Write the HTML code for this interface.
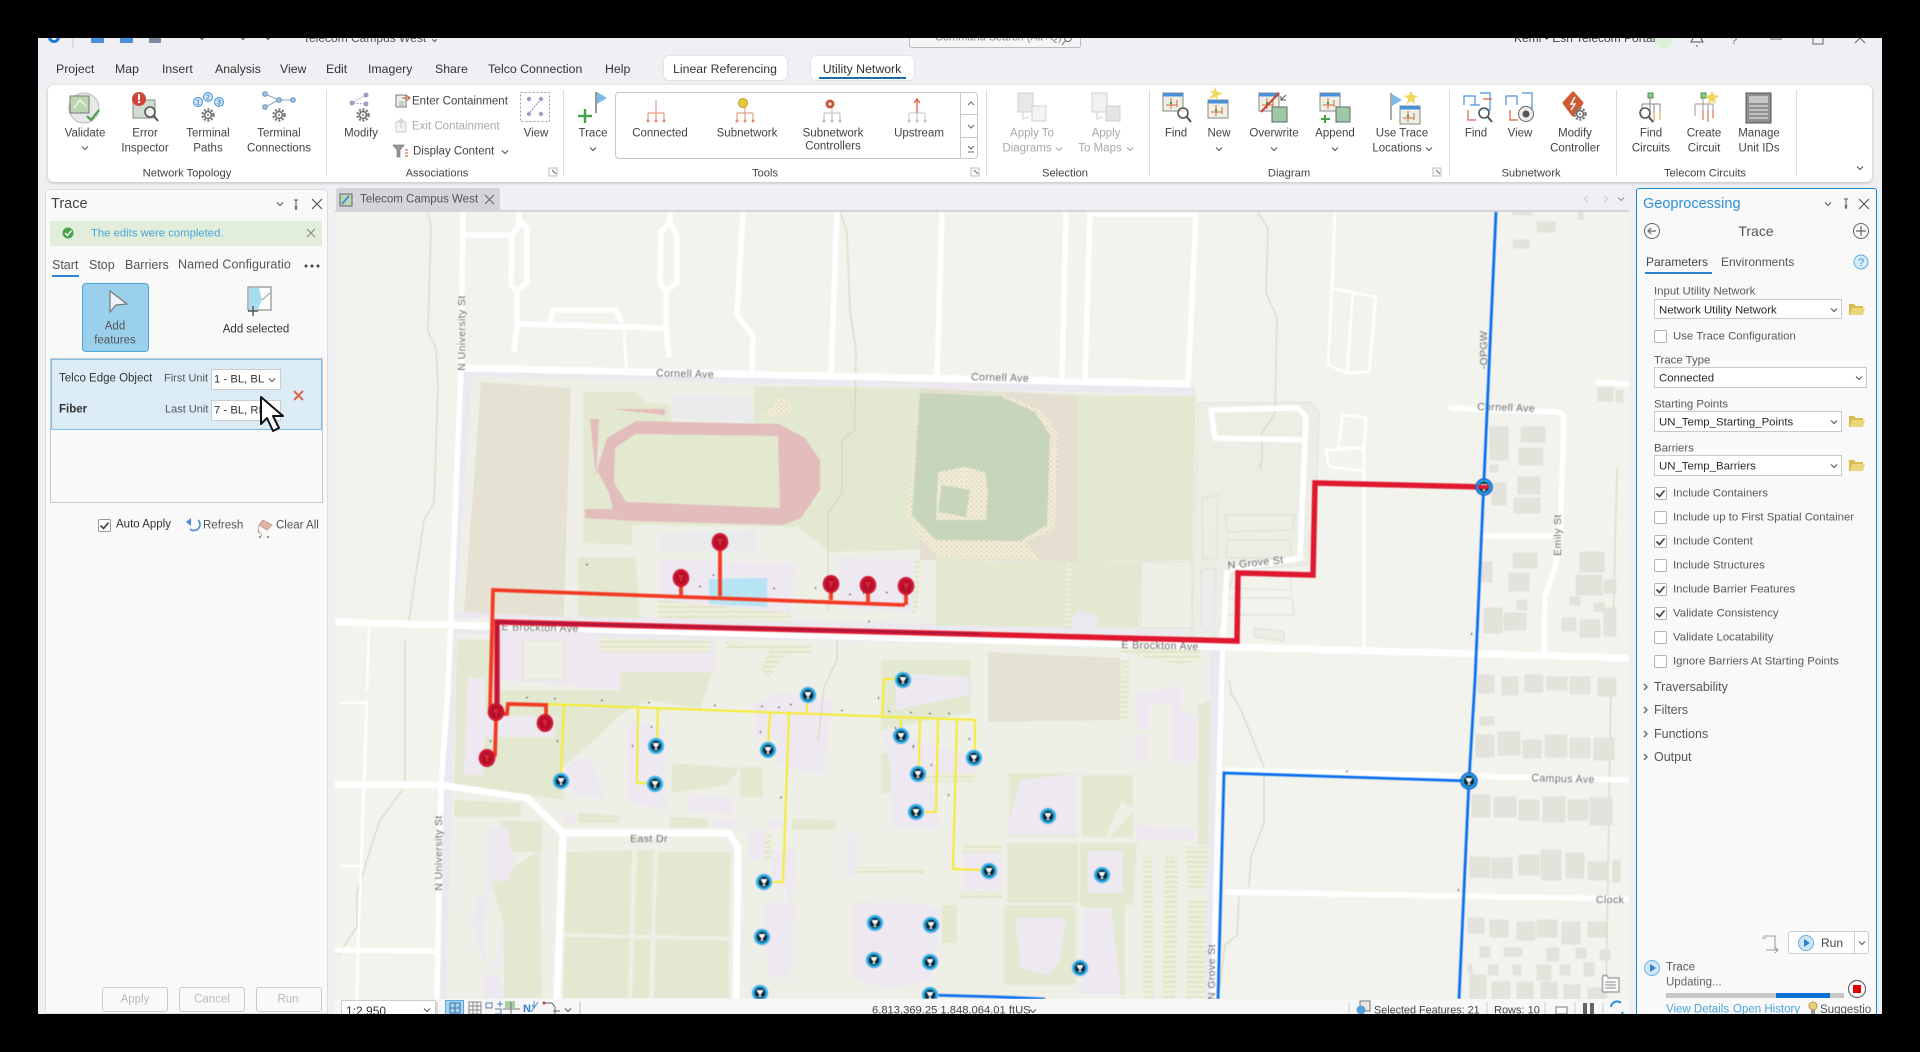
<!DOCTYPE html>
<html><head><meta charset="utf-8"><title>Telecom Campus West</title>
<style>
html,body{margin:0;padding:0;background:#000;width:1920px;height:1052px;overflow:hidden}
body{position:relative;font-family:"Liberation Sans",sans-serif;color:#444}
.a{position:absolute}
.t{position:absolute;white-space:nowrap;transform:translateY(calc(-50% + 1px));font-size:12px;line-height:1}
.c{position:absolute;white-space:nowrap;transform:translate(-50%,calc(-50% + 1px));font-size:11.5px;line-height:1;text-align:center}
.g{color:#a9a9a9}
.dd{position:absolute;background:#fff;border:1px solid #c9c9c9;box-sizing:border-box}
.cb{position:absolute;width:13px;height:13px;background:#fff;border:1px solid #b4b4b4;border-radius:2px;box-sizing:border-box}
.p{font-size:11.4px;color:#5a5a5a}
.v{font-size:11.4px;color:#2a2a2a}
.h{font-size:12.5px;color:#555}
</style></head><body>
<div class="a" style="left:38px;top:38px;width:1844px;height:976px;background:#eef0f3"></div>

<!-- title bar -->
<div class="t" style="left:303px;top:37px;font-size:12px;color:#555">Telecom Campus West ⌄</div>
<div class="a" style="left:909px;top:30px;width:172px;height:18px;border:1px solid #bbb;border-radius:3px;box-sizing:border-box;background:#f4f5f7"></div>
<div class="t" style="left:935px;top:37px;font-size:11px;color:#888">Command Search (Alt+Q)</div>
<div class="t" style="left:1514px;top:37px;font-size:12px;color:#444">Kemi • Esri Telecom Portal</div>

<!-- menu -->
<div class="t" style="left:56px;top:68px;font-size:12.3px;color:#333">Project</div>
<div class="t" style="left:115px;top:68px;font-size:12.3px;color:#333">Map</div>
<div class="t" style="left:162px;top:68px;font-size:12.3px;color:#333">Insert</div>
<div class="t" style="left:215px;top:68px;font-size:12.3px;color:#333">Analysis</div>
<div class="t" style="left:280px;top:68px;font-size:12.3px;color:#333">View</div>
<div class="t" style="left:326px;top:68px;font-size:12.3px;color:#333">Edit</div>
<div class="t" style="left:368px;top:68px;font-size:12.3px;color:#333">Imagery</div>
<div class="t" style="left:435px;top:68px;font-size:12.3px;color:#333">Share</div>
<div class="t" style="left:488px;top:68px;font-size:12.3px;color:#333">Telco Connection</div>
<div class="t" style="left:605px;top:68px;font-size:12.3px;color:#333">Help</div>
<div class="a" style="left:664px;top:56px;width:123px;height:24px;background:#fff;border-radius:5px;box-shadow:0 0 2px #ccc"></div>
<div class="c" style="left:725px;top:68px;font-size:12.3px;color:#333">Linear Referencing</div>
<div class="a" style="left:811px;top:56px;width:103px;height:24px;background:#fff;border-radius:5px;box-shadow:0 0 2px #ccc"></div>
<div class="c" style="left:862px;top:68px;font-size:12.3px;color:#333">Utility Network</div>
<div class="a" style="left:819px;top:77px;width:87px;height:2px;background:#1a6aa8"></div>

<!-- ribbon -->
<div class="a" style="left:48px;top:85px;width:1824px;height:97px;background:#fff;border-radius:6px;box-shadow:0 1px 3px #bbb"></div>
<div class="a" style="left:326px;top:90px;width:1px;height:86px;background:#ddd"></div>
<div class="a" style="left:563px;top:90px;width:1px;height:86px;background:#ddd"></div>
<div class="a" style="left:986px;top:90px;width:1px;height:86px;background:#ddd"></div>
<div class="a" style="left:1149px;top:90px;width:1px;height:86px;background:#ddd"></div>
<div class="a" style="left:1449px;top:90px;width:1px;height:86px;background:#ddd"></div>
<div class="a" style="left:1616px;top:90px;width:1px;height:86px;background:#ddd"></div>
<div class="a" style="left:1796px;top:90px;width:1px;height:86px;background:#ddd"></div>
<div class="a" style="left:615px;top:92px;width:363px;height:67px;border:1px solid #c8c8c8;border-radius:4px;box-sizing:border-box"></div>
<div class="a" style="left:960px;top:92px;width:1px;height:67px;background:#c8c8c8"></div>
<div class="a" style="left:960px;top:114px;width:18px;height:1px;background:#c8c8c8"></div>
<div class="a" style="left:960px;top:137px;width:18px;height:1px;background:#c8c8c8"></div>

<div class="c" style="left:85px;top:133px">Validate</div>
<div class="c" style="left:145px;top:133px">Error</div><div class="c" style="left:145px;top:148px">Inspector</div>
<div class="c" style="left:208px;top:133px">Terminal</div><div class="c" style="left:208px;top:148px">Paths</div>
<div class="c" style="left:279px;top:133px">Terminal</div><div class="c" style="left:279px;top:148px">Connections</div>
<div class="c" style="left:361px;top:133px">Modify</div>
<div class="t" style="left:412px;top:101px;font-size:11.5px">Enter Containment</div>
<div class="t g" style="left:412px;top:126px;font-size:11.5px">Exit Containment</div>
<div class="t" style="left:413px;top:151px;font-size:11.5px">Display Content</div>
<div class="c" style="left:536px;top:133px">View</div>
<div class="c" style="left:593px;top:133px">Trace</div>
<div class="c" style="left:660px;top:133px">Connected</div>
<div class="c" style="left:747px;top:133px">Subnetwork</div>
<div class="c" style="left:833px;top:133px">Subnetwork</div><div class="c" style="left:833px;top:146px">Controllers</div>
<div class="c" style="left:919px;top:133px">Upstream</div>
<div class="c g" style="left:1032px;top:133px">Apply To</div><div class="c g" style="left:1027px;top:148px">Diagrams</div>
<div class="c g" style="left:1106px;top:133px">Apply</div><div class="c g" style="left:1100px;top:148px">To Maps</div>
<div class="c" style="left:1176px;top:133px">Find</div>
<div class="c" style="left:1219px;top:133px">New</div>
<div class="c" style="left:1274px;top:133px">Overwrite</div>
<div class="c" style="left:1335px;top:133px">Append</div>
<div class="c" style="left:1402px;top:133px">Use Trace</div><div class="c" style="left:1397px;top:148px">Locations</div>
<div class="c" style="left:1476px;top:133px">Find</div>
<div class="c" style="left:1520px;top:133px">View</div>
<div class="c" style="left:1575px;top:133px">Modify</div><div class="c" style="left:1575px;top:148px">Controller</div>
<div class="c" style="left:1651px;top:133px">Find</div><div class="c" style="left:1651px;top:148px">Circuits</div>
<div class="c" style="left:1704px;top:133px">Create</div><div class="c" style="left:1704px;top:148px">Circuit</div>
<div class="c" style="left:1759px;top:133px">Manage</div><div class="c" style="left:1759px;top:148px">Unit IDs</div>
<div class="c" style="left:187px;top:173px;font-size:11.2px">Network Topology</div>
<div class="c" style="left:437px;top:173px;font-size:11.2px">Associations</div>
<div class="c" style="left:765px;top:173px;font-size:11.2px">Tools</div>
<div class="c" style="left:1065px;top:173px;font-size:11.2px">Selection</div>
<div class="c" style="left:1289px;top:173px;font-size:11.2px">Diagram</div>
<div class="c" style="left:1531px;top:173px;font-size:11.2px">Subnetwork</div>
<div class="c" style="left:1705px;top:173px;font-size:11.2px">Telecom Circuits</div>

<!-- left panel -->
<div class="a" style="left:45px;top:189px;width:283px;height:825px;background:#f9f9f9;border:1px solid #ddd;border-radius:3px 3px 0 0;box-sizing:border-box"></div>
<div class="t" style="left:51px;top:203px;font-size:14.5px;color:#444">Trace</div>
<div class="a" style="left:50px;top:221px;width:272px;height:25px;background:#e2eedb"></div>
<div class="t" style="left:91px;top:233px;font-size:11.3px;color:#4aa3db">The edits were completed.</div>
<div class="t" style="left:52px;top:264px;font-size:12.5px;color:#555">Start</div>
<div class="t" style="left:89px;top:264px;font-size:12.5px;color:#555">Stop</div>
<div class="t" style="left:125px;top:264px;font-size:12.5px;color:#555">Barriers</div>
<div class="t" style="left:178px;top:264px;font-size:12.5px;color:#555;width:114px;overflow:hidden;line-height:15px;letter-spacing:.1px">Named Configuratio</div>
<div class="a" style="left:52px;top:275px;width:27px;height:2px;background:#2a84d2"></div>
<div class="a" style="left:82px;top:283px;width:67px;height:69px;background:#9ad0ec;border:1px solid #4aa6dc;border-radius:4px;box-sizing:border-box"></div>
<div class="c" style="left:115px;top:326px;font-size:11.5px;color:#555">Add</div>
<div class="c" style="left:115px;top:340px;font-size:11.5px;color:#555">features</div>
<div class="c" style="left:256px;top:329px;font-size:11.5px;color:#333">Add selected</div>
<div class="a" style="left:50px;top:358px;width:273px;height:145px;border:1px solid #c9c9c9;box-sizing:border-box"></div>
<div class="a" style="left:51px;top:359px;width:271px;height:71px;background:#dcecf6;border:1px solid #7cc0ea;box-sizing:border-box"></div>
<div class="t" style="left:59px;top:378px;font-size:11.5px;color:#333">Telco Edge Object</div>
<div class="t" style="left:59px;top:409px;font-size:11.5px;font-weight:bold;color:#333">Fiber</div>
<div class="t" style="left:164px;top:378px;font-size:11px;color:#555">First Unit</div>
<div class="t" style="left:165px;top:409px;font-size:11px;color:#555">Last Unit</div>
<div class="a" style="left:211px;top:369px;width:70px;height:21px;background:#fff;border:1px solid #ccc;box-sizing:border-box"></div>
<div class="a" style="left:211px;top:400px;width:70px;height:21px;background:#fff;border:1px solid #ccc;box-sizing:border-box"></div>
<div class="t" style="left:214px;top:379px;font-size:11.3px;color:#333">1 - BL, BL</div>
<div class="t" style="left:214px;top:410px;font-size:11.3px;color:#333">7 - BL, RD</div>
<div class="cb" style="left:98px;top:519px;border-color:#999"></div>
<div class="t" style="left:116px;top:524px;font-size:11.5px;color:#333">Auto Apply</div>
<div class="t" style="left:203px;top:525px;font-size:11.5px;color:#555">Refresh</div>
<div class="t" style="left:276px;top:525px;font-size:11.5px;color:#555">Clear All</div>
<div class="a" style="left:102px;top:987px;width:66px;height:25px;border:1px solid #ccc;border-radius:3px;box-sizing:border-box"></div>
<div class="a" style="left:179px;top:987px;width:66px;height:25px;border:1px solid #ccc;border-radius:3px;box-sizing:border-box"></div>
<div class="a" style="left:256px;top:987px;width:66px;height:25px;border:1px solid #ccc;border-radius:3px;box-sizing:border-box"></div>
<div class="c" style="left:135px;top:999px;color:#bbb">Apply</div>
<div class="c" style="left:212px;top:999px;color:#bbb">Cancel</div>
<div class="c" style="left:288px;top:999px;color:#bbb">Run</div>

<!-- map tab -->
<div class="a" style="left:336px;top:188px;width:164px;height:23px;background:#d3d5d9;border-radius:3px 3px 0 0"></div>
<div class="t" style="left:360px;top:199px;font-size:11.5px;color:#555">Telecom Campus West</div>
<div class="a" style="left:335px;top:210px;width:1294px;height:2px;background:#cfd2d6"></div>

<!-- map -->
<svg class="a" style="left:335px;top:212px;filter:blur(.4px)" width="1294" height="787" viewBox="335 212 1294 787" xmlns="http://www.w3.org/2000/svg">
<defs>
<pattern id="d" width="5" height="5" patternUnits="userSpaceOnUse"><rect width="5" height="5" fill="#f2edd8"/><circle cx="1.5" cy="1.5" r=".7" fill="#c4b98e"/><circle cx="4" cy="3.8" r=".6" fill="#c9c09a"/></pattern>
<pattern id="e" width="5" height="5" patternUnits="userSpaceOnUse"><rect width="5" height="5" fill="#eef0dc"/><path d="M0 1.5L3 3M3 .5L5 2" stroke="#cfd2ac" stroke-width=".7"/></pattern>
<g id="m"><circle r="8.5" fill="#a9c8ee"/><circle r="7.5" fill="#1ea9e2"/><circle r="5.2" fill="#0b2333"/><path d="M-3.5-3H3.5L1.6 .8H.7V3.3H2V4H-2V3.3H-.7V.8H-1.6Z" fill="#fff"/></g>
<g id="r"><ellipse rx="8.3" ry="9" fill="#cf1433"/><ellipse rx="5.5" ry="6.2" fill="#b40f2a"/><path d="M-3-3H3L.8 1V3.5H-.8V1Z" fill="#d8283c"/></g>
</defs>
<rect x="335" y="212" width="1294" height="787" fill="#f2f3ec"/>
<!-- campus bases -->
<path d="M462 368L1195 386 1192 636 448 618Z" fill="#ece8f0"/>
<path d="M472 376L1192 395 1190 630 456 612Z" fill="#eef0e8"/>
<path d="M449 626L1227 645 1215 999H437Z" fill="#ece8f0"/>
<path d="M457 634L1210 648 1205 999H446Z" fill="#eef0e8"/>
<path d="M481 382L571 388 564 617 464 612Z" fill="#e6e2d3"/>
<path d="M583 392L636 392 646 402 670 405 672 424 754 425 754 386 920 388 920 550 830 552 797 527 632 525 632 545 583 543Z" fill="#e3e9d1"/>
<path d="M673 394L750 397 754 422 669 419Z" fill="#e9ebec"/>
<path d="M781 395L795 412 760 418Z" fill="url(#d)"/>
<path d="M611 409L665 409 665 415Z" fill="#e3bcbc"/><path d="M590 419L599 419 596 477Z" fill="#e3bcbc"/>
<path d="M636 421L779 424 805 438 820 460 820 490 801 518 783 525 634 521 585 518 585 509 613 509 609 493 597 470 607 438Z" fill="#e3bcbc"/>
<path d="M635 434L778 436 780 508 626 502 614 483 615 448Z" fill="#e2e9cf"/>
<path d="M920 388L1078 395 1078 562 920 560Z" fill="#e4dfd1"/>
<path d="M920 393L1004 395 1041 410 1058 433 1055 528 1025 542 1040 560 940 558 920 538 907 517Z" fill="url(#d)"/>
<path d="M920 393L1000 396 1035 412 1050 435 1047 525 1020 541 936 540 912 515Z" fill="#c6d5bb"/>
<path d="M938 472L964 467 985 472 988 493 986 520 936 520Z" fill="url(#d)"/>
<path d="M942 485L970 490 966 517 938 512Z" fill="#c6d5bb"/>
<path d="M1078 395L1196 396 1193 560 1078 562Z" fill="#e3e9d1"/>
<path d="M980 562L1141 562 1139 628 980 626Z" fill="#e3e9d1"/>
<rect x="1141" y="562" width="51" height="66" fill="#eef0e8" stroke="#dfe1d8"/>
<path d="M1068 625L1078 610 1099 617 1088 640Z" fill="#ece8f0"/>
<path d="M1066 560L1072 562 1070 628 1065 628Z" fill="url(#e)"/>
<path d="M659 532L756 530 756 554 659 550Z" fill="#e9ebec"/>
<path d="M578 557L636 558 640 618 578 617Z" fill="#e3e9d1"/>
<path d="M659 560L795 563 791 612 659 607Z" fill="#eee9f1"/>
<path d="M709 579L767 578 767 607 709 604Z" fill="#b6e4f3"/>
<path d="M658 600L791 613 791 622 658 618Z" fill="url(#e)"/>
<path d="M839 557L915 560 915 613 839 607Z" fill="#eee9f1"/>
<path d="M936 557L980 560 980 625 936 626Z" fill="#e3e9d1"/>
<path d="M915 560L920 560 918 612 913 612Z" fill="url(#e)"/>
<!-- south greens -->
<path d="M457 640L500 640 500 690 620 690 618 672 640 660 715 665 700 710 650 700 620 715 600 735 560 770 565 800 454 785Z" fill="#e3e9d1"/>
<path d="M500 634L715 640 715 672 620 672 620 690 500 680Z" fill="#eee9f1"/>
<rect x="523" y="640" width="41" height="40" fill="#eef0e8" stroke="#dfe1d8"/>
<path d="M599 638L711 641 711 652 599 652Z" fill="url(#e)"/>
<path d="M726 642L811 645 811 653 785 655 769 678 760 670 770 650 726 650Z" fill="url(#e)"/>
<path d="M468 678L485 678 485 715 555 717 555 737 502 737 485 737 483 775 464 775Z" fill="#eee9f1"/>
<path d="M559 777L576 758 592 760 605 800 574 793 559 780Z" fill="#eee9f1"/>
<path d="M626 727L635 720 664 727 666 810 628 803Z" fill="#eee9f1"/>
<path d="M672 763L740 768 727 785 672 793Z" fill="#e3e9d1"/>
<path d="M740 767L763 767 763 797 740 797Z" fill="#e3e9d1"/>
<path d="M755 703L782 692 832 700 824 775 776 765 778 737 755 737Z" fill="#eee9f1"/>
<path d="M881 660L971 660 971 713 881 730Z" fill="#e3e9d1"/>
<path d="M896 673L969 677 969 695 896 710Z" fill="#eee9f1"/>
<path d="M881 753L891 753 891 793 881 793Z" fill="#e3e9d1"/>
<path d="M883 730L975 757 975 783 938 773 938 830 891 827 891 770Z" fill="#eee9f1"/>
<path d="M919 773L975 773 975 782 919 782Z" fill="url(#e)"/>
<path d="M454 800L521 803 521 817 454 817ZM578 813L620 815 620 823 578 823ZM670 817L708 818 708 828 670 828ZM792 818L836 820 836 830 792 830ZM500 820L542 822 542 852 500 852ZM853 902L868 902 868 960 853 960ZM942 905L957 905 957 943 942 943Z" fill="#e3e9d1"/>
<path d="M563 813L576 814 576 823 563 823ZM712 818L740 819 735 828 712 828ZM689 793L733 799 733 815 689 812ZM767 820L788 820 788 828 767 828ZM748 830L765 830 765 860 748 860ZM847 833L855 833 855 877 847 877ZM765 903L795 903 790 977 770 977 763 930Z" fill="#eee9f1"/>
<path d="M567 852L632 850 630 935 565 933ZM637 850L654 850 651 935 634 935ZM658 852L731 852 729 937 655 935ZM565 937L630 938 628 998 563 998ZM634 939L651 939 649 998 632 998ZM655 939L729 940 729 998 654 998Z" fill="#e3e9d1"/>
<path d="M491 882L540 850 542 998 504 998 504 927Z" fill="#e3e9d1"/>
<path d="M489 827L508 827 510 850 517 857 508 880 491 882 496 895 475 897 473 927 485 965 498 962 502 927 505 927 500 970 485 965Z" fill="#eee9f1"/>
<path d="M484 975L500 975 503 998 484 998Z" fill="#eee9f1"/>
<path d="M765 833L771 833 771 860 765 860Z" fill="url(#e)"/>
<path d="M771 850L795 850 795 885 772 885Z" fill="#eee9f1"/>
<path d="M782 860L795 860 790 920 784 880Z" fill="#eee9f1"/>
<path d="M856 867L925 868 925 875 856 873Z" fill="url(#e)"/>
<path d="M853 903L908 903 942 908 933 980 887 990 853 977Z" fill="#eee9f1"/>
<path d="M963 850L1002 850 1002 890 963 890Z" fill="#eee9f1"/><path d="M963 843L1002 843 1002 852 963 852ZM961 892L1002 892 1002 898 961 898Z" fill="url(#e)"/>
<path d="M1009 773L1078 773 1078 837 1009 837Z" fill="#e3e9d1"/>
<path d="M1021 780L1078 773 1078 835 1009 835 1009 820Z" fill="#eee9f1"/>
<path d="M1082 775L1133 775 1133 837 1082 837Z" fill="#e3e9d1"/><path d="M1105 838L1122 800 1135 810 1110 837Z" fill="#eef0e8"/>
<path d="M1007 843L1078 843 1078 903 1007 903Z" fill="#e3e9d1"/>
<path d="M1080 843L1137 843 1133 905 1080 905Z" fill="#e3e9d1"/>
<path d="M1088 851L1123 851 1123 893 1088 893Z" fill="#eee9f1"/>
<path d="M1004 905L1076 905 1076 985 1004 985Z" fill="#e3e9d1"/>
<path d="M1015 918L1066 918 1060 960 1049 975 1021 968Z" fill="#eee9f1"/>
<path d="M1082 905L1125 905 1125 995 1121 995 1111 908 1084 908Z" fill="#e3e9d1"/>
<path d="M1084 910L1111 910 1121 995 1080 995Z" fill="#eee9f1"/>
<path d="M988 652L1121 658 1120 720 988 722Z" fill="#e6e2d3"/>
<path d="M1122 660L1130 660 1128 720 1120 720ZM1118 645L1200 650 1200 660 1180 665 1120 652ZM1185 847L1208 847 1206 890 1188 888ZM1188 898L1207 898 1205 998 1186 998ZM1143 857L1152 857 1154 998 1143 998ZM1165 857L1178 857 1176 998 1162 998Z" fill="url(#e)"/>
<path d="M1137 692L1182 687 1182 710 1196 717 1196 762 1172 762 1172 703 1149 705 1149 730 1137 730ZM1135 735L1147 733 1147 758 1135 765ZM1135 825L1197 828 1194 840 1137 840Z" fill="#eee9f1"/>
<path d="M1198 705L1210 700 1208 845 1198 845Z" fill="#e3e9d1"/>
<!-- grove complex -->
<path d="M1198 403L1311 402 1319 412 1317 480 1307 565 1235 570 1215 640 1192 636Z" fill="#eceee6" stroke="#e1e3db"/>
<path d="M1202 498L1218 495 1216 558 1203 560ZM1201 570L1216 568 1214 630 1201 627ZM1225 515L1295 515 1292 530 1227 532ZM1227 540L1291 540 1291 558 1226 558ZM1228 572L1291 574 1291 590 1230 588ZM1226 598L1292 598 1294 615 1225 615Z" fill="none" stroke="#dcdfd5"/>
<path d="M1203 633L1218 633 1218 590 1202 570Z" fill="#ece8f0" opacity=".6"/>
<path d="M1254 628L1284 632 1284 641 1254 637Z" fill="#eceee6" stroke="#dcdfd5"/>
<!-- thin cream paths -->
<g fill="none" stroke="#d8cfbb" stroke-width="1">
<path d="M428 213L431 225 428 332 436 348 438 385 434 503 424 520 409 620"/>
<path d="M405 640V783L401 792 380 820 367 860 357 893 357 927 338 955"/>
<path d="M1258 213L1268 228 1266 293 1277 317 1275 413 1262 433 1262 457 1260 470"/>
<path d="M1229 680L1231 693 1241 710 1264 767 1264 823 1251 857 1249 887M1239 897L1237 935 1225 945 1219 993"/>
<path d="M1611 680L1606 998M1617 467L1613 633"/>
<path d="M856 350L855 430 842 440 842 493 828 513 828 610M837 640V660L824 687 818 740"/>
<path d="M840 212L847 232 850 310 856 350"/>
</g>
<!-- residential -->
<path fill="#e3e3dc" stroke="#d9d9d1" stroke-width=".5" d="M1537 222h18v10h-18zM1513 240h16v8h-16zM1513 212h18v3h-18zM1578 212h5v7h-5zM1598 388h15v13h-15zM1616 390h7v12h-7zM1490 427h18v33h-18zM1521 427h24v15h-24zM1519 448h24v17h-24zM1490 465h8v7h-8zM1518 477h22v17h-22zM1492 483h14v22h-14zM1514 498h26v15h-26zM1513 553h24v15h-24zM1482 562h10v20h-10zM1509 573h20v18h-20zM1580 552h24v20h-24zM1576 575h26v20h-26zM1517 600h10v10h-10zM1570 597h10v8h-10zM1594 603h10v8h-10zM1484 608h18v25h-18zM1504 613h22v17h-22zM1562 618h14v13h-14zM1580 620h20v17h-20zM1604 580h12v13h-12zM1604 608h12v28h-12zM1478 675h16v18h-16zM1502 677h16v18h-16zM1525 675h18v17h-18zM1547 677h20v13h-20zM1570 677h20v17h-20zM1598 678h18v18h-18zM1480 717h14v8h-14zM1476 735h18v22h-18zM1498 732h22v23h-22zM1523 740h18v18h-18zM1545 735h22v22h-22zM1570 738h20v20h-20zM1594 738h20v22h-20zM1472 795h18v22h-18zM1494 797h22v20h-22zM1519 800h20v20h-20zM1543 797h22v25h-22zM1568 800h20v20h-20zM1590 798h22v27h-22zM1470 857h20v20h-20zM1492 858h20v20h-20zM1519 855h20v20h-20zM1541 850h20v30h-20zM1566 853h18v25h-18zM1588 862h20v18h-20zM1613 860h7v22h-7zM1468 918h16v15h-16zM1490 920h18v17h-18zM1517 922h18v18h-18zM1537 920h20v17h-20zM1562 922h18v22h-18zM1588 922h18v15h-18zM1480 947h10v10h-10zM1504 948h18v8h-18zM1547 948h12v13h-12zM1576 948h10v10h-10zM1600 950h10v10h-10zM1468 965h4v8h-4zM1488 965h10v10h-10zM1513 965h8v10h-8zM1537 965h14v15h-14zM1560 965h10v10h-10zM1584 963h10v13h-10zM1470 975h16v24h-16zM1492 982h18v17h-18zM1517 982h16v17h-16zM1541 982h16v17h-16zM1564 985h16v14h-16zM1588 988h16v11h-16z"/>
<!-- roads -->
<g fill="none" stroke="#fff" stroke-linejoin="round" stroke-linecap="butt">
<g stroke-width="7">
<path d="M461 368L1190 384"/><path d="M335 622L1629 658"/>
<path d="M335 785H441L527 798 563 833H729L738 848 736 999"/>
<path d="M563 833L557 999"/>
</g>
<g stroke-width="5.5">
<path d="M463 212L461 368 448 690 441 785 437 999"/>
<path d="M1227 570L1223 640 1213 999"/>
<path d="M1229 570L1300 558 1306 417 1298 408 1211 410 1215 438 1306 440"/>
<path d="M1449 408L1558 412Q1564 414 1564 420L1560 533 1555 567 1545 597 1544 652"/>
<path d="M1225 770L1629 780"/><path d="M1225 892L1629 899"/>
<path d="M335 950L437 951"/>
<path d="M1596 382L1629 384"/>
<path d="M1066 212L1062 380M1090 212L1085 380M1090 214H1196L1188 383"/>
<path d="M1482 536L1558 536"/>
<path d="M519 212V225L512 235 511 285 517 291 527 283 527 228 519 220M517 291V325L514 352"/>
<path d="M670 212V222L661 232 660 283 666 292 677 282 677 235 670 222M666 292V328L669 357"/>
<path d="M519 324L666 328M550 322L553 310H616L622 323"/>
<path d="M743 212L737 315 753 336 752 372"/>
<path d="M837 212L831 373"/><path d="M942 212L937 377"/>
<path d="M465 235H515"/>
</g>
<g stroke-width="2.5">
<path d="M1335 213L1332 288 1376 297 1369 372 1347 373 1328 365 1332 288M1353 292L1347 373"/>
<path d="M1343 415L1366 418 1364 448H1338ZM1326 450L1364 448 1364 471 1329 467ZM1364 471V647"/>
<path d="M624 330L626 368"/>
<path d="M369 627L367 690M367 700L358 950 357 999M340 703H367M340 866H363"/>
</g>
</g>
<!-- labels -->
<g font-family="Liberation Sans,sans-serif" font-size="10.5" fill="#6b6b6b" letter-spacing=".4" text-anchor="middle">
<text transform="translate(685 377) rotate(1.5)">Cornell Ave</text>
<text transform="translate(1000 381) rotate(1.5)">Cornell Ave</text>
<text transform="translate(1506 411) rotate(2)">Cornell Ave</text>
<text transform="translate(540 631) rotate(1.5)">E Brockton Ave</text>
<text transform="translate(1160 649) rotate(1.5)">E Brockton Ave</text>
<text transform="translate(465 333) rotate(-90)">N University St</text>
<text transform="translate(442 853) rotate(-90)">N University St</text>
<text transform="translate(1256 566) rotate(-6)">N Grove St</text>
<text transform="translate(1215 972) rotate(-90)">N Grove St</text>
<text x="649" y="842">East Dr</text>
<text transform="translate(1563 782) rotate(1.5)">Campus Ave</text>
<text x="1610" y="903">Clock</text>
<text transform="translate(1561 535) rotate(-90)">Emily St</text>
<text transform="translate(1487 350) rotate(-90)">-OPGW</text>
</g>
<!-- tiny dots -->
<path fill="#444" d="M586 564h2v1h-2zM713 574h1v2h-1zM699 586h2v1h-2zM773 588h2v1h-2zM849 594h2v1h-2zM863 592h1v2h-1zM886 592h2v1h-2zM815 587h1v2h-1zM868 621h2v1h-2zM526 697h2v1h-2zM554 698h2v1h-2zM601 700h2v1h-2zM648 702h2v1h-2zM714 705h2v1h-2zM761 706h2v1h-2zM778 707h2v1h-2zM790 704h2v1h-2zM841 710h2v1h-2zM878 697h1v2h-1zM888 711h2v1h-2zM910 712h2v1h-2zM929 713h2v1h-2zM948 713h2v1h-2zM895 727h1v2h-1zM913 745h1v3h-1zM931 764h1v2h-1zM969 738h1v2h-1zM948 794h1v2h-1zM780 797h2v1h-2zM651 726h1v2h-1zM632 745h1v2h-1zM557 740h1v2h-1zM490 740h1v2h-1zM760 731h1v2h-1zM1346 771h2v1h-2zM1458 889h1v2h-1zM1471 633h1v2h-1z"/>
<!-- yellow -->
<g fill="none" stroke="#f5ec2b" stroke-width="2">
<path d="M546 704L975 720V750M564 705L561 773M638 708L637 783H647M658 709L657 740M770 713L768 743M789 713L783 882H773M807 703V713M882 716L884 679H895M901 717V728M920 718L919 767M938 719L936 812H925M957 719L953 869 982 870"/>
</g>
<!-- blue -->
<g fill="none" stroke="#0a6fee" stroke-width="2.8" stroke-linejoin="miter">
<path d="M1496 212L1475 680 1469 780 1459 999"/>
<path d="M1469 781L1224 773 1218 999"/>
<path d="M930 995L1000 997 1045 999"/>
</g>
<!-- red traces -->
<g fill="none" stroke-linejoin="miter">
<g stroke="#f23a22" stroke-width="3.8">
<path d="M905 605L493 590 490 712M906 587V605M868 585V603M831 585V600M720 542V596M681 580V597"/>
<path d="M496 720L495 755 487 758M503 714L507 714 508 704 546 705 546 717"/>
</g>
<path d="M1484 487L1315 483 1313 575 1238 573 1237 641 497 622 497 712" stroke="#e0182f" stroke-width="5.5"/>
<path d="M980 634L497 622 497 712" stroke="#a8163f" stroke-width="2"/>
</g>
<use href="#r" x="720" y="542"/><use href="#r" x="681" y="578"/><use href="#r" x="831" y="584"/><use href="#r" x="868" y="585"/><use href="#r" x="906" y="586"/>
<use href="#r" x="496" y="712"/><use href="#r" x="545" y="723"/><use href="#r" x="487" y="758"/>
<use href="#m" x="561" y="781"/><use href="#m" x="656" y="746"/><use href="#m" x="655" y="784"/><use href="#m" x="768" y="750"/><use href="#m" x="808" y="695"/><use href="#m" x="903" y="680"/><use href="#m" x="901" y="736"/><use href="#m" x="918" y="774"/><use href="#m" x="916" y="812"/><use href="#m" x="974" y="758"/><use href="#m" x="989" y="871"/><use href="#m" x="764" y="882"/><use href="#m" x="762" y="937"/><use href="#m" x="875" y="923"/><use href="#m" x="931" y="925"/><use href="#m" x="874" y="960"/><use href="#m" x="930" y="962"/><use href="#m" x="760" y="993"/><use href="#m" x="930" y="995"/><use href="#m" x="1048" y="816"/><use href="#m" x="1102" y="875"/><use href="#m" x="1080" y="968"/>
<use href="#m" x="1469" y="781"/><circle cx="1469" cy="781" r="8" fill="none" stroke="#1f5fd8" stroke-width="1.5"/>
<use href="#m" x="1484" y="487"/><circle cx="1484" cy="487" r="8" fill="none" stroke="#1f5fd8" stroke-width="1.5"/><path d="M1478 487H1489" stroke="#e0182f" stroke-width="4"/>
<g transform="translate(1602 975)"><path d="M.5 3V17H17V3H6L5 .5H1Z" fill="#fff" stroke="#777"/><path d="M3 7H14M3 10H14M3 13H14" stroke="#777"/></g>
</svg>

<!-- status bar -->
<div class="a" style="left:335px;top:999px;width:1294px;height:15px;background:#f7f7f8"></div>
<div class="a" style="left:341px;top:1000px;width:95px;height:20px;background:#fff;border:1px solid #ccc;box-sizing:border-box"></div>
<div class="t" style="left:346px;top:1010px;font-size:12px;color:#333">1:2,950</div>
<div class="a" style="left:445px;top:1000px;width:19px;height:18px;background:#a8d4ef;border:1px solid #5aa9dc;box-sizing:border-box"></div>
<div class="t" style="left:872px;top:1010px;font-size:11.2px;color:#444">6,813,369.25 1,848,064.01 ftUS</div>
<div class="t" style="left:1374px;top:1010px;font-size:10.8px;color:#444">Selected Features: 21</div>
<div class="t" style="left:1494px;top:1010px;font-size:11px;color:#444">Rows: 10</div>

<!-- right panel -->
<div class="a" style="left:1636px;top:188px;width:241px;height:826px;background:#f9f9f9;border:1px solid #1f87d0;border-bottom:0;border-radius:3px 3px 0 0;box-sizing:border-box"></div>
<div class="t" style="left:1643px;top:203px;font-size:14.5px;color:#2d8fd5">Geoprocessing</div>
<div class="c" style="left:1756px;top:230px;font-size:14px;color:#555">Trace</div>
<div class="t" style="left:1646px;top:261px;font-size:12px;color:#444">Parameters</div>
<div class="a" style="left:1645px;top:272px;width:67px;height:2px;background:#2a84d2"></div>
<div class="t" style="left:1721px;top:261px;font-size:12px;color:#555">Environments</div>
<div class="t p" style="left:1654px;top:291px">Input Utility Network</div>
<div class="dd" style="left:1654px;top:299px;width:188px;height:20px"></div>
<div class="t v" style="left:1659px;top:310px">Network Utility Network</div>
<div class="cb" style="left:1654px;top:330px"></div>
<div class="t p" style="left:1673px;top:336px">Use Trace Configuration</div>
<div class="t p" style="left:1654px;top:360px">Trace Type</div>
<div class="dd" style="left:1654px;top:367px;width:213px;height:21px"></div>
<div class="t v" style="left:1659px;top:378px">Connected</div>
<div class="t p" style="left:1654px;top:404px">Starting Points</div>
<div class="dd" style="left:1654px;top:411px;width:188px;height:21px"></div>
<div class="t v" style="left:1659px;top:422px">UN_Temp_Starting_Points</div>
<div class="t p" style="left:1654px;top:448px">Barriers</div>
<div class="dd" style="left:1654px;top:455px;width:188px;height:21px"></div>
<div class="t v" style="left:1659px;top:466px">UN_Temp_Barriers</div>
<div class="cb" style="left:1654px;top:487px"></div><div class="t p" style="left:1673px;top:493px">Include Containers</div>
<div class="cb" style="left:1654px;top:511px"></div><div class="t p" style="left:1673px;top:517px">Include up to First Spatial Container</div>
<div class="cb" style="left:1654px;top:535px"></div><div class="t p" style="left:1673px;top:541px">Include Content</div>
<div class="cb" style="left:1654px;top:559px"></div><div class="t p" style="left:1673px;top:565px">Include Structures</div>
<div class="cb" style="left:1654px;top:583px"></div><div class="t p" style="left:1673px;top:589px">Include Barrier Features</div>
<div class="cb" style="left:1654px;top:607px"></div><div class="t p" style="left:1673px;top:613px">Validate Consistency</div>
<div class="cb" style="left:1654px;top:631px"></div><div class="t p" style="left:1673px;top:637px">Validate Locatability</div>
<div class="cb" style="left:1654px;top:655px"></div><div class="t p" style="left:1673px;top:661px">Ignore Barriers At Starting Points</div>
<div class="t h" style="left:1654px;top:686px">Traversability</div>
<div class="t h" style="left:1654px;top:709px">Filters</div>
<div class="t h" style="left:1654px;top:733px">Functions</div>
<div class="t h" style="left:1654px;top:756px">Output</div>
<div class="a" style="left:1788px;top:931px;width:81px;height:23px;background:#fff;border:1px solid #ccc;border-radius:3px;box-sizing:border-box"></div>
<div class="a" style="left:1854px;top:931px;width:1px;height:23px;background:#ccc"></div>
<div class="t" style="left:1821px;top:942px;font-size:12px;color:#444">Run</div>
<div class="t" style="left:1666px;top:967px;font-size:11.5px;color:#555">Trace</div>
<div class="t" style="left:1666px;top:982px;font-size:11.5px;color:#666">Updating...</div>
<div class="a" style="left:1666px;top:993px;width:178px;height:5px;background:#c6c6c6"></div>
<div class="a" style="left:1776px;top:993px;width:54px;height:5px;background:#0a74d4"></div>
<div class="t" style="left:1666px;top:1009px;font-size:11.5px;color:#4aa3db">View Details</div>
<div class="t" style="left:1733px;top:1009px;font-size:11.5px;color:#4aa3db">Open History</div>
<div class="t" style="left:1820px;top:1009px;font-size:11.5px;color:#555;width:52px;overflow:hidden;line-height:14px">Suggestions</div>

<!-- icon overlay -->
<svg class="a" style="left:0;top:0" width="1920" height="1052" viewBox="0 0 1920 1052" xmlns="http://www.w3.org/2000/svg">
<defs>
<g id="gear"><circle r="5.5" fill="none" stroke="#777" stroke-width="2.4" stroke-dasharray="2 1.6"/><circle r="3.4" fill="none" stroke="#666" stroke-width="1.4"/><circle r="1.2" fill="#999"/></g>
<g id="mag"><circle r="5" fill="#fff" fill-opacity=".6" stroke="#555" stroke-width="1.6"/><path d="M3.5 3.5L8 9" stroke="#555" stroke-width="2"/></g>
<path id="chev" d="M-3-1.5L0 1.5 3-1.5" fill="none" stroke="#555" stroke-width="1.1"/>
<g id="grid"><rect width="20" height="18" fill="#eef0e6" stroke="#888"/><rect width="20" height="3.5" fill="#4a90d9"/><path d="M3 12H14M8 5V16M14 7V14" stroke="#d5653a" fill="none"/><circle cx="8" cy="10" r="1.2" fill="#3a9c4a"/></g>
<g id="fold"><path d="M0 12V1H5L6.5 3H14V12Z" fill="#d9bd4c"/><path d="M1 12L3 5H16L14 12Z" fill="#ecd67d"/></g>
<g id="tree"><path d="M0 0V13M-8 13H8M-8 13V21M0 13V21M8 13V21" fill="none" stroke-width="1"/><circle cx="-8" cy="21" r="1"/><circle cy="21" r="1"/><circle cx="8" cy="21" r="1"/></g>
<path id="ck" d="M2.5 6.5L5.5 9.5 10.5 3.5" fill="none" stroke="#444" stroke-width="1.7"/>
</defs>
<!-- title icons -->
<circle cx="54" cy="37" r="6" fill="#1f7ad0"/><circle cx="54" cy="37" r="3" fill="#fff"/>
<path d="M73 30V48" stroke="#ccc"/>
<rect x="91" y="32" width="13" height="11" fill="#4a90d9"/><rect x="120" y="32" width="13" height="11" fill="#4a90d9"/><rect x="149" y="32" width="12" height="11" fill="#7a8aa0"/>
<use href="#chev" x="202" y="38"/><use href="#chev" x="243" y="38"/><use href="#chev" x="268" y="38"/>
<circle cx="1664" cy="40" r="9" fill="#dff0d8"/><path d="M1691 42H1703L1701 38V34H1693V38ZM1697 45V47" fill="none" stroke="#555"/><path d="M1770 39H1782M1813 34H1823V44H1813ZM1855 33L1865 43M1865 33L1855 43" stroke="#666" fill="none"/>
<text x="1731" y="44" font-size="11" fill="#666" font-family="Liberation Sans">?</text>
<circle cx="1068" cy="38" r="3.5" fill="none" stroke="#666"/><path d="M1065 41L1062 45" stroke="#666"/>

<!-- network topology -->
<circle cx="84" cy="108" r="15" fill="#e7e7e7" stroke="#bbb"/><rect x="70" y="96" width="19" height="17" fill="#bcd6b0" stroke="#777"/><path d="M74 108L80 100 86 106" stroke="#fff" fill="none"/><path d="M87 116L91 120 99 110" fill="none" stroke="#49a04f" stroke-width="2.2"/><use href="#chev" x="85" y="148"/>
<rect x="133" y="100" width="22" height="18" fill="#cfdccf" stroke="#888"/><circle cx="139" cy="99" r="7" fill="#d0443a"/><rect x="138" y="94" width="2" height="6" fill="#fff"/><rect x="138" y="101" width="2" height="2" fill="#fff"/><use href="#mag" x="150" y="112"/>
<g fill="#cfe5f7" stroke="#3b8fd6"><circle cx="198" cy="102" r="4.5"/><circle cx="208" cy="97" r="4.5"/><circle cx="219" cy="102" r="4.5"/></g>
<g font-family="Liberation Sans" font-size="7" fill="#1d5f9e" text-anchor="middle"><text x="198" y="104.5">1</text><text x="208" y="99.5">2</text><text x="219" y="104.5">3</text></g>
<use href="#gear" x="208" y="115"/>
<path d="M265 94L279 100H293M265 107L279 100" stroke="#8aa6c8" fill="none"/><g fill="#a7c7e7" stroke="#5e8fc0"><circle cx="265" cy="94" r="2.3"/><circle cx="265" cy="107" r="2.3"/><circle cx="279" cy="100" r="2.3"/><circle cx="293" cy="100" r="2.3"/></g><use href="#gear" x="279" y="115"/>
<!-- associations -->
<path d="M366 95L352 103 366 104" stroke="#b0a8c8" stroke-dasharray="2 1" fill="none"/><g fill="#a79bc4"><circle cx="366" cy="95" r="2.5"/><circle cx="352" cy="103" r="2.5"/><circle cx="366" cy="104" r="2.5"/></g><use href="#gear" x="363" y="115"/>
<rect x="396" y="95" width="10" height="12" fill="#eee" stroke="#777"/><path d="M402 98H410M406 95L410 98 406 101" stroke="#c0562f" fill="none"/><rect x="399" y="101" width="5" height="5" fill="#bcd6b0"/>
<rect x="396" y="122" width="10" height="10" fill="#f2f2f2" stroke="#ccc"/><path d="M401 128V119M398 122L401 119 404 122" stroke="#ccc" fill="none"/>
<path d="M393 145H404L400 150V157H397V150Z" fill="#999" stroke="#666" stroke-width=".6"/><path d="M405 150H408M405 153H408M405 156H408" stroke="#c0562f"/><use href="#chev" x="505" y="152"/>
<rect x="520.5" y="92.5" width="29" height="29" fill="none" stroke="#999" stroke-dasharray="2 2"/><path d="M541 99L530 112" stroke="#8a7cb8" stroke-dasharray="2 1"/><g fill="#a79bc4"><circle cx="529" cy="99" r="2.2"/><circle cx="541" cy="99" r="2.2"/><circle cx="529" cy="114" r="2.2"/><circle cx="541" cy="114" r="2.2"/></g>
<!-- trace -->
<path d="M596 92V113" stroke="#555" stroke-width="1.2"/><path d="M597 92L607 98 597 104Z" fill="#7cbce8"/><path d="M585 109V123M578 116H592" stroke="#46a24c" stroke-width="2.4"/><use href="#chev" x="593" y="149"/>
<!-- gallery -->
<g opacity=".8">
<use href="#tree" x="656" y="100" stroke="#d9714e" fill="#d9714e"/>
<use href="#tree" x="745" y="100" stroke="#d9714e" fill="#d9714e"/>
<use href="#tree" x="832" y="100" stroke="#aaa" fill="#aaa"/>
<use href="#tree" x="917" y="100" stroke="#bbb" fill="#bbb"/>
</g>
<circle cx="743" cy="103" r="4.5" fill="#e9c93a" stroke="#b79b1e"/>
<circle cx="830" cy="104" r="4.5" fill="#c9553d"/><circle cx="830" cy="104" r="1.5" fill="#fff"/>
<path d="M917 113V100M914 103L917 99 920 103" stroke="#d9543e" fill="none" stroke-width="1.2"/>
<path d="M968 105L971 102 974 105M968 125L971 128 974 125M968 146L971 149 974 146M968 152H974" stroke="#666" fill="none"/>
<rect x="549" y="168" width="8" height="8" fill="none" stroke="#bbb"/><path d="M552 170L556 174" stroke="#666"/>
<rect x="971" y="168" width="8" height="8" fill="none" stroke="#bbb"/><path d="M974 170L978 174" stroke="#666"/>
<rect x="1433" y="168" width="8" height="8" fill="none" stroke="#bbb"/><path d="M1436 170L1440 174" stroke="#666"/>
<!-- selection -->
<g opacity=".9"><rect x="1018" y="93" width="15" height="19" fill="#e6e6e6" stroke="#ccc"/><rect x="1032" y="106" width="14" height="15" fill="#f2f2f2" stroke="#ccc"/><path d="M1023 112V119L1029 117" fill="none" stroke="#ccc"/></g>
<g opacity=".9"><rect x="1092" y="93" width="15" height="19" fill="#f0f0f0" stroke="#ccc"/><rect x="1106" y="106" width="14" height="15" fill="#e2e2e2" stroke="#ccc"/><path d="M1097 112V119L1103 117" fill="none" stroke="#ccc"/></g>
<use href="#chev" x="1059" y="149" opacity=".5"/><use href="#chev" x="1130" y="149" opacity=".5"/>
<!-- diagram -->
<use href="#grid" x="1163" y="93"/><use href="#mag" x="1183" y="113"/>
<use href="#grid" x="1208" y="100"/><path d="M1209 90L1213 94 1209 99 1215 97 1219 101 1217 96 1223 93 1217 92 1215 87 1213 92Z" fill="#f0d65a"/><use href="#chev" x="1219" y="149"/>
<use href="#grid" x="1259" y="93"/><path d="M1261 112L1279 93" stroke="#c9412f" stroke-width="2"/><rect x="1272" y="107" width="15" height="15" fill="#9fc9a6" stroke="#666"/><path d="M1281 100L1286 95M1281 96V100H1286" stroke="#555" fill="none"/><use href="#chev" x="1274" y="149"/>
<use href="#grid" x="1320" y="93"/><rect x="1336" y="107" width="14" height="15" fill="#9fc9a6" stroke="#666"/><path d="M1325 115V123M1321 119H1330" stroke="#45a24b" stroke-width="2"/><use href="#chev" x="1335" y="149"/>
<path d="M1391 93V120" stroke="#555"/><path d="M1392 94L1402 100 1392 106Z" fill="#7cbce8"/><use href="#grid" x="1400" y="106"/><path d="M1411 91L1413 95 1418 96 1414 99 1415 104 1411 101 1407 104 1408 99 1404 96 1409 95Z" fill="#f0d65a"/><use href="#chev" x="1429" y="149"/>
<!-- subnetwork -->
<path d="M1464 105V96H1475V105M1480 93H1490V110H1480M1470 105H1480" fill="none" stroke="#4a90d9" stroke-width="1.2"/><path d="M1468 110V120H1476M1483 99H1492" fill="none" stroke="#d5653a" stroke-width="1.2"/><use href="#mag" x="1484" y="113"/>
<path d="M1506 105V96H1517V105M1522 93H1532V110H1522" fill="none" stroke="#4a90d9" stroke-width="1.2"/><path d="M1510 110V120H1518" fill="none" stroke="#d5653a" stroke-width="1.2"/><circle cx="1526" cy="114" r="7.5" fill="#eee" stroke="#666"/><circle cx="1526" cy="114" r="3.5" fill="#555"/>
<path d="M1573 93L1582 103 1573 115 1564 103Z" fill="#cf5b36" stroke="#cf5b36" stroke-linejoin="round" stroke-width="3"/><path d="M1575 97L1571 104H1575L1571 110" stroke="#fff" stroke-width="1.4" fill="none"/><use href="#gear" x="1580" y="114"/>
<!-- telecom circuits -->
<path d="M1650 98V112M1642 104V118M1650 104H1642M1650 104H1660V118M1654 104V122" stroke="#888" fill="none"/><path d="M1654 112V122M1660 112V120" stroke="#c94"/><rect x="1648" y="93" width="5" height="5" fill="#8dc98a" stroke="#4a944a"/><use href="#mag" x="1645" y="113"/>
<path d="M1703 98V118M1695 104V116M1703 104H1695M1703 104H1713V118M1708 104V122" stroke="#999" fill="none"/><path d="M1703 110V120M1708 110V122M1713 110V118" stroke="#d0563f"/><rect x="1701" y="93" width="5" height="5" fill="#8dc98a" stroke="#4a944a"/><path d="M1712 91L1714 95 1719 96 1715 99 1716 104 1712 101 1708 104 1709 99 1705 96 1710 95Z" fill="#f0d65a"/>
<rect x="1746" y="93" width="25" height="30" fill="#8f9192" stroke="#555"/><rect x="1749" y="96" width="19" height="7" fill="#c8c8c8"/><path d="M1749 106H1768M1749 110H1768M1749 114H1768M1749 118H1768" stroke="#eee"/>
<use href="#chev" x="1860" y="168"/>
<!-- panel headers -->
<use href="#chev" x="280" y="204"/><path d="M296 200V206M294 200H298M295 206L296 210 297 206" stroke="#555" fill="none"/><path d="M312 199L322 209M322 199L312 209" stroke="#555" stroke-width="1.2"/>
<use href="#chev" x="1828" y="204"/><path d="M1846 199V205M1844 199H1848M1845 205L1846 209 1847 205" stroke="#555" fill="none"/><path d="M1859 199L1869 209M1869 199L1859 209" stroke="#555" stroke-width="1.2"/>
<path d="M1588 196L1584 199 1588 202M1604 196L1608 199 1604 202" stroke="#ccc" fill="none"/><use href="#chev" x="1621" y="199" opacity=".6"/>
<!-- tab icon -->
<rect x="340" y="194" width="12" height="12" fill="#bcd6b0" stroke="#666"/><path d="M342 204L349 196" stroke="#4a90d9" stroke-width="2"/>
<path d="M485 195L494 204M494 195L485 204" stroke="#666" stroke-width="1.1"/>
<!-- left panel items -->
<circle cx="68" cy="233" r="5.5" fill="#4ea24e"/><path d="M65 233L67.5 235.5 71.500 230.500" stroke="#fff" stroke-width="1.3" fill="none"/>
<path d="M307 229L315 237M315 229L307 237" stroke="#888" stroke-width="1.1"/>
<g fill="#444"><circle cx="306" cy="266" r="1.5"/><circle cx="312" cy="266" r="1.5"/><circle cx="318" cy="266" r="1.5"/></g>
<path d="M110 291V312L116 305 127 304Z" fill="#eef4f8" stroke="#777" stroke-width="1.2"/>
<rect x="248" y="287" width="23" height="23" fill="#fff" stroke="#777"/><path d="M249 288H259L262 300 257 311H249Z" fill="#a8dcf0"/><path d="M262 300L270 293" stroke="#999" fill="none"/><path d="M253 306V316M248 311H258" stroke="#555" stroke-width="1.4"/>
<use href="#chev" x="272" y="380"/>
<path d="M294 391L303 400M303 391L294 400" stroke="#d9684a" stroke-width="2"/>
<path d="M261 397L261 424 267 418 273 431 279 428 273 416 283 416Z" fill="#fff" stroke="#111" stroke-width="2" stroke-linejoin="round"/>
<use href="#ck" x="98" y="519"/>
<path d="M198 520A6 6 0 1 1 190 529" fill="none" stroke="#4a8ed8" stroke-width="1.6"/><path d="M186 522L191 518 191 526Z" fill="#4a8ed8"/>
<path d="M263 520L272 525 267 530 259 525ZM258 530L262 536M259 525L258 533" fill="#e0b5a0" stroke="#b88" stroke-width=".7"/>
<circle cx="260" cy="537" r="1" fill="#777"/><circle cx="268" cy="537" r="1" fill="#777"/>
<!-- scale / status icons -->
<use href="#chev" x="427" y="1010"/>
<path d="M450 1003H460V1013H450ZM455 1003V1013M450 1008H460" stroke="#3b6f9c" fill="none"/>
<path d="M469 1002H481V1014H469ZM469 1006H481M469 1010H481M473 1002V1014M477 1002V1014" stroke="#888" fill="none"/>
<path d="M486 1003H492V1008H486ZM495 1009H501V1014H495M497 1004H503M500 1001V1007" stroke="#5a7fa8" fill="none"/>
<rect x="505" y="1001" width="10" height="7" fill="#a9cfa5"/><path d="M503 1009H520M511 1002V1014" stroke="#777"/>
<text x="523" y="1012" font-size="11" font-weight="bold" fill="#2f7ed0" font-family="Liberation Sans">N</text>
<path d="M534 1001V1007M532 1005L534 1008 536 1005M531 1012L538 1002" stroke="#4a8ed8" fill="none"/>
<path d="M544 1003H552L555 1007V1014M553 1011H560" stroke="#666" fill="none"/><circle cx="544" cy="1003" r="1.5" fill="#c0402f"/>
<use href="#chev" x="568" y="1010"/><path d="M437 1002V1014M580 1002V1014" stroke="#bbb"/>
<use href="#chev" x="1033" y="1011"/>
<path d="M1349 1002V1014M1487 1002V1014M1545 1002V1014M1575 1002V1014M1603 1002V1014" stroke="#ccc"/>
<rect x="1360" y="1001" width="10" height="10" fill="#e8e8e8" stroke="#777"/><circle cx="1361" cy="1010" r="4.5" fill="#5a9ed8"/>
<rect x="1556" y="1007" width="11" height="7" fill="#fff" stroke="#777"/>
<rect x="1583" y="1003" width="4" height="11" fill="#666"/><rect x="1590" y="1003" width="4" height="11" fill="#666"/>
<path d="M1621 1003A6 6 0 0 0 1611 1007M1623 1012A6 6 0 0 1 1613 1014" stroke="#2f8fd8" stroke-width="2" fill="none"/>
<!-- right panel items -->
<circle cx="1652" cy="231" r="7.5" fill="none" stroke="#666"/><path d="M1656 231H1648M1651 228L1648 231 1651 234" stroke="#666" fill="none" stroke-width="1.2"/>
<circle cx="1861" cy="231" r="7.5" fill="none" stroke="#666"/><path d="M1861 226V236M1856 231H1866" stroke="#666" stroke-width="1.2"/>
<circle cx="1861" cy="262" r="7" fill="#d6ebf9" stroke="#5aa9e0"/><text x="1861" y="266" font-size="11" fill="#3b93d8" text-anchor="middle" font-family="Liberation Sans">?</text>
<use href="#chev" x="1834" y="310"/><use href="#chev" x="1859" y="378"/><use href="#chev" x="1834" y="422"/><use href="#chev" x="1834" y="466"/>
<use href="#fold" x="1849" y="303"/><use href="#fold" x="1849" y="415"/><use href="#fold" x="1849" y="459"/>
<use href="#ck" x="1654" y="487"/><use href="#ck" x="1654" y="535"/><use href="#ck" x="1654" y="583"/><use href="#ck" x="1654" y="607"/>
<g fill="none" stroke="#666" stroke-width="1.4"><path d="M1644 684L1647 687 1644 690M1644 707L1647 710 1644 713M1644 731L1647 734 1644 737M1644 754L1647 757 1644 760"/></g>
<path d="M1764 936H1775V950H1770M1762 938H1766M1766 950H1778M1775 947L1778 950 1775 953" fill="none" stroke="#999"/>
<circle cx="1806" cy="943" r="7.5" fill="#d0e6f7" stroke="#6aaee0"/><path d="M1804 939L1810 943 1804 947Z" fill="#2f7fd0"/>
<use href="#chev" x="1862" y="943"/>
<circle cx="1652" cy="968" r="7.5" fill="#d0e6f7" stroke="#6aaee0"/><path d="M1650 964L1656 968 1650 972Z" fill="#2f7fd0"/>
<circle cx="1857" cy="989" r="8.5" fill="#fff" stroke="#666" stroke-width="1.2"/><rect x="1853" y="985" width="8" height="8" fill="#e60000"/>
<circle cx="1813" cy="1006" r="4" fill="#e9d27a" stroke="#b89a3a"/><rect x="1811" y="1010" width="4" height="4" fill="#999"/>
</svg>

<!-- frame -->
<div class="a" style="left:0;top:0;width:1920px;height:38px;background:#000;z-index:9"></div>
<div class="a" style="left:0;top:1014px;width:1920px;height:38px;background:#000;z-index:9"></div>
<div class="a" style="left:0;top:0;width:38px;height:1052px;background:#000;z-index:9"></div>
<div class="a" style="left:1882px;top:0;width:38px;height:1052px;background:#000;z-index:9"></div>
</body></html>
